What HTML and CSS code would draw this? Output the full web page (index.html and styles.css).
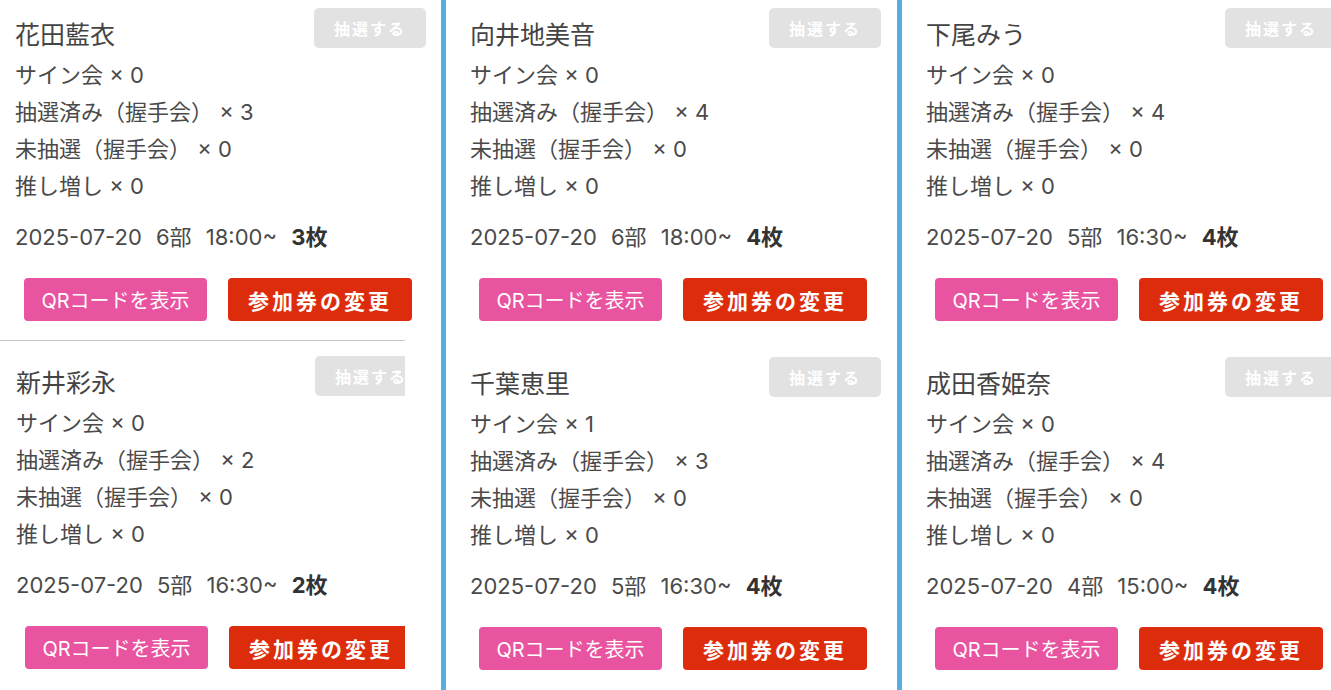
FILE: index.html
```html
<!DOCTYPE html>
<html lang="ja">
<head>
<meta charset="utf-8">
<title>参加券</title>
<link rel="stylesheet" href="styles.css">
</head>
<body>
<div class="board">
  <div class="col col--a">
    <section class="card">
      <div class="head"><h2 class="name">花田藍衣</h2><button class="draw">抽選する</button></div>
      <ul class="counts">
        <li>サイン会 × 0</li>
        <li>抽選済み（握手会） × 3</li>
        <li>未抽選（握手会） × 0</li>
        <li>推し増し × 0</li>
      </ul>
      <p class="date">2025-07-20 6部 18:00~ <b>3枚</b></p>
      <div class="actions"><button class="btn btn--qr">QRコードを表示</button><button class="btn btn--change">参加券の変更</button></div>
    </section>
    <div class="clip">
      <section class="card">
        <div class="head"><h2 class="name">新井彩永</h2><button class="draw">抽選する</button></div>
        <ul class="counts">
          <li>サイン会 × 0</li>
          <li>抽選済み（握手会） × 2</li>
          <li>未抽選（握手会） × 0</li>
          <li>推し増し × 0</li>
        </ul>
        <p class="date">2025-07-20 5部 16:30~ <b>2枚</b></p>
        <div class="actions"><button class="btn btn--qr">QRコードを表示</button><button class="btn btn--change">参加券の変更</button></div>
      </section>
    </div>
  </div>
  <div class="divider"></div>
  <div class="col col--b">
    <section class="card">
      <div class="head"><h2 class="name">向井地美音</h2><button class="draw">抽選する</button></div>
      <ul class="counts">
        <li>サイン会 × 0</li>
        <li>抽選済み（握手会） × 4</li>
        <li>未抽選（握手会） × 0</li>
        <li>推し増し × 0</li>
      </ul>
      <p class="date">2025-07-20 6部 18:00~ <b>4枚</b></p>
      <div class="actions"><button class="btn btn--qr">QRコードを表示</button><button class="btn btn--change">参加券の変更</button></div>
    </section>
    <section class="card card--low">
      <div class="head"><h2 class="name">千葉恵里</h2><button class="draw">抽選する</button></div>
      <ul class="counts">
        <li>サイン会 × 1</li>
        <li>抽選済み（握手会） × 3</li>
        <li>未抽選（握手会） × 0</li>
        <li>推し増し × 0</li>
      </ul>
      <p class="date">2025-07-20 5部 16:30~ <b>4枚</b></p>
      <div class="actions"><button class="btn btn--qr">QRコードを表示</button><button class="btn btn--change">参加券の変更</button></div>
    </section>
  </div>
  <div class="divider"></div>
  <div class="col col--c">
    <section class="card">
      <div class="head"><h2 class="name">下尾みう</h2><button class="draw">抽選する</button></div>
      <ul class="counts">
        <li>サイン会 × 0</li>
        <li>抽選済み（握手会） × 4</li>
        <li>未抽選（握手会） × 0</li>
        <li>推し増し × 0</li>
      </ul>
      <p class="date">2025-07-20 5部 16:30~ <b>4枚</b></p>
      <div class="actions"><button class="btn btn--qr">QRコードを表示</button><button class="btn btn--change">参加券の変更</button></div>
    </section>
    <section class="card card--low">
      <div class="head"><h2 class="name">成田香姫奈</h2><button class="draw">抽選する</button></div>
      <ul class="counts">
        <li>サイン会 × 0</li>
        <li>抽選済み（握手会） × 4</li>
        <li>未抽選（握手会） × 0</li>
        <li>推し増し × 0</li>
      </ul>
      <p class="date">2025-07-20 4部 15:00~ <b>4枚</b></p>
      <div class="actions"><button class="btn btn--qr">QRコードを表示</button><button class="btn btn--change">参加券の変更</button></div>
    </section>
  </div>
</div>
</body>
</html>
```

FILE: styles.css
```css
html, body {
  margin: 0;
  padding: 0;
  background: #ffffff;
}

body {
  width: 1331px;
  height: 690px;
  overflow: hidden;
  font-family: "Noto Sans CJK JP", "Noto Sans", sans-serif;
  color: #4a4a4a;
}

.board {
  display: grid;
  grid-template-columns: 441px 5px 451px 5px 429px;
  height: 690px;
}

.col {
  display: grid;
  grid-template-rows: 340px 350px;
  overflow: hidden;
  min-width: 0;
}

.divider {
  background: #58ade1;
}

.card {
  box-sizing: border-box;
  padding-top: 8px;
  min-width: 0;
}

.card--low {
  padding-top: 17px;
}

.col--a .card {
  padding-left: 15px;
}

.col--b .card,
.col--c .card {
  padding-left: 24px;
}

.clip {
  width: 405px;
  overflow: hidden;
  border-top: 1px solid #c9c9c9;
}

.clip .card {
  padding-top: 15px;
  padding-left: 16px;
}

.head {
  display: flex;
  align-items: flex-start;
}

.name {
  flex: 0 0 299px;
  margin: 7px 0 0;
  font-size: 25px;
  line-height: 36px;
  font-weight: 400;
  color: #444444;
}

.draw {
  flex: 0 0 112px;
  height: 40px;
  padding: 0;
  border: 0;
  border-radius: 5px;
  background: #e2e2e2;
  color: #ffffff;
  font-family: "Noto Sans CJK JP", sans-serif;
  font-size: 16px;
  font-weight: 700;
  letter-spacing: 2px;
}

.counts {
  list-style: none;
  margin: 6px 0 0;
  padding: 0;
  font-family: Inter, "Noto Sans CJK JP", sans-serif;
  font-size: 22px;
  font-weight: 400;
  line-height: 37px;
  white-space: nowrap;
}

.date {
  margin: 14px 0 0;
  font-family: Inter, "Noto Sans CJK JP", sans-serif;
  font-size: 22px;
  line-height: 37px;
  word-spacing: 8px;
  white-space: nowrap;
}

.date b {
  font-weight: 700;
  color: #333333;
}

.actions {
  display: flex;
  gap: 21px;
  margin: 22px 0 0 9px;
}

.btn {
  flex: 0 0 auto;
  height: 43px;
  padding: 0;
  border: 0;
  border-radius: 4px;
  color: #ffffff;
  white-space: nowrap;
}

.btn--qr {
  width: 183px;
  background: #e8549f;
  font-family: Inter, "Noto Sans CJK JP", sans-serif;
  font-size: 20px;
  font-weight: 400;
}

.btn--change {
  width: 184px;
  background: #dd2c0c;
  font-family: "Noto Sans CJK JP", sans-serif;
  font-size: 21px;
  font-weight: 700;
  letter-spacing: 3px;
}
```
